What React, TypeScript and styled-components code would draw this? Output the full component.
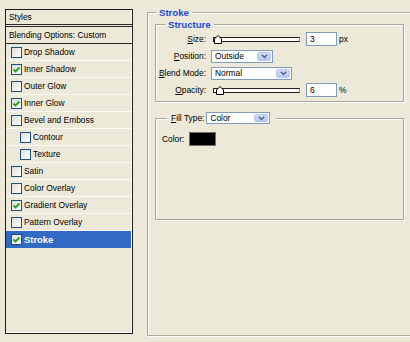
import styled, { createGlobalStyle } from 'styled-components';

const GlobalStyle = createGlobalStyle`
  html, body {
    margin: 0;
    padding: 0;
  }
  body {
    width: 410px;
    height: 342px;
    overflow: hidden;
    background: #ECE9D8;
    font-family: 'Liberation Sans', Arial, sans-serif;
    font-size: 8.4px;
    color: #000;
  }
`;

const Dialog = styled.div`
  display: flex;
  align-items: flex-start;
  padding-left: 5px;
  gap: 14px;
`;

/* ---------- styles list ---------- */

const StylesPanel = styled.div`
  flex: none;
  margin-top: 9px;
  width: 128px;
  height: 325px;
  box-sizing: border-box;
  border: 1px solid #1e1e1e;
  box-shadow: inset -1px -1px 0 #fff;
  display: flex;
  flex-direction: column;
`;

const PanelHeader = styled.div`
  height: 14px;
  display: flex;
  align-items: center;
  padding-left: 3px;
  border-bottom: 3px double #2a2a2a;
`;

const BlendingRow = styled.div`
  height: 16px;
  display: flex;
  align-items: center;
  padding-left: 3px;
  border-bottom: 1px solid #2a2a2a;
`;

const EffectRow = styled.div<{ $nested?: boolean; $selected?: boolean }>`
  height: 16px;
  display: flex;
  align-items: center;
  gap: 2px;
  padding-left: ${p => (p.$nested ? 14 : 5)}px;
  margin-right: 1px;
  border-bottom: 1px solid ${p => (p.$selected ? '#316AC5' : '#fbfaf5')};
  background: ${p => (p.$selected ? '#316AC5' : 'transparent')};
  color: ${p => (p.$selected ? '#fff' : '#000')};
  font-weight: ${p => (p.$selected ? 'bold' : 'normal')};
  font-size: ${p => (p.$selected ? '9.4px' : 'inherit')};
`;

const CheckBox = styled.span`
  width: 11px;
  height: 11px;
  box-sizing: border-box;
  border: 1px solid #1C5180;
  background: linear-gradient(135deg, #DCDCD7, #fff);
  display: flex;
  align-items: center;
  justify-content: center;
  flex: none;
`;

const Check = ({ checked }: { checked?: boolean }) => (
  <CheckBox>
    {checked && (
      <svg width="9" height="9" viewBox="0 0 9 9">
        <polyline points="1.5,4.5 3.5,6.5 7.5,2.5" fill="none" stroke="#21A121" strokeWidth="1.8" />
      </svg>
    )}
  </CheckBox>
);

/* ---------- group boxes ---------- */

const Group = styled.fieldset<{ $w: number; $h: number }>`
  flex: none;
  margin: 0;
  padding: 0;
  min-inline-size: 0;
  width: ${p => p.$w}px;
  height: ${p => p.$h}px;
  box-sizing: border-box;
  border: 1px solid #ACA899;
  box-shadow: inset 1px 1px 0 #fff, 1px 1px 0 #fff;
`;

const Legend = styled.legend`
  margin-left: 8px;
  padding: 0 3px;
  background: #ECE9D8;
  color: #1c4bd4;
  font-weight: bold;
  font-size: 9.6px;
  line-height: 11px;
`;

const OuterGroup = styled(Group)`
  margin-top: 7px;
  padding-top: 0;
`;

const StructureGroup = styled(Group)`
  margin: 1px 0 0 7px;
  padding: 2px 0 0 1px;
`;

const FillGroup = styled(Group)`
  margin: 10px 0 0 7px;
  padding: 8px 0 0 6px;
`;

const FillLegend = styled.legend`
  margin-left: 5px;
  padding: 0 6px 0 4px;
  background: #ECE9D8;
  display: flex;
  align-items: center;
  gap: 2px;
  height: 12px;
`;

/* ---------- form ---------- */

const FormGrid = styled.div`
  display: grid;
  grid-template-columns: 49px auto;
  grid-auto-rows: 14px;
  column-gap: 5px;
  row-gap: 3px;
  align-items: center;
`;

const Label = styled.label`
  text-align: right;
  white-space: nowrap;
`;

const ControlRow = styled.div`
  display: flex;
  align-items: center;
`;

const SliderBox = styled.div`
  position: relative;
  margin-left: 2px;
  width: 87px;
  height: 14px;
  display: flex;
  align-items: center;
`;

const Track = styled.div`
  width: 100%;
  height: 5px;
  box-sizing: border-box;
  border: 1px solid #1e1e1e;
  border-right-color: #8a8778;
  background: #fdfcf4;
`;

const Thumb = styled.svg`
  position: absolute;
  top: 3px;
`;

const NumberInput = styled.input`
  margin-left: 6px;
  width: 31px;
  height: 14px;
  box-sizing: border-box;
  border: 1px solid #7F9DB9;
  background: #fff;
  padding: 0 0 0 3px;
  font: inherit;
  color: #000;
  outline: none;
`;

const Unit = styled.span`
  margin-left: 2px;
`;

const SelectBox = styled.div<{ $w: number; $h: number }>`
  width: ${p => p.$w}px;
  height: ${p => p.$h}px;
  box-sizing: border-box;
  border: 1px solid #7F9DB9;
  background: #fff;
  padding: 1px;
  display: flex;
  align-items: center;
`;

const SelectValue = styled.span`
  flex: 1;
  padding-left: 2px;
  white-space: nowrap;
`;

const SelectButton = styled.span`
  width: 14px;
  height: 100%;
  border-radius: 2px;
  background: linear-gradient(#cfdcfc, #b6c9f5);
  border: 1px solid #b7c8f2;
  box-sizing: border-box;
  display: flex;
  align-items: center;
  justify-content: center;
`;

const Select = ({ value, w, h = 13 }: { value: string; w: number; h?: number }) => (
  <SelectBox $w={w} $h={h}>
    <SelectValue>{value}</SelectValue>
    <SelectButton>
      <svg width="7" height="5" viewBox="0 0 7 5">
        <polyline points="0.8,0.8 3.5,3.5 6.2,0.8" fill="none" stroke="#4d6185" strokeWidth="1.5" />
      </svg>
    </SelectButton>
  </SelectBox>
);

const Slider = ({ value, max }: { value: number; max: number }) => (
  <SliderBox>
    <Track />
    <Thumb width="8" height="9" viewBox="0 0 8 9" style={{ left: Math.round((value / max) * 50) }}>
      <polygon points="4,0.5 7.5,4 7.5,8.5 0.5,8.5 0.5,4" fill="#fdfcf4" stroke="#000" strokeWidth="1" />
    </Thumb>
  </SliderBox>
);

const ColorRow = styled.div`
  display: flex;
  align-items: center;
  gap: 5px;
`;

const Swatch = styled.div`
  width: 27px;
  height: 14px;
  box-sizing: border-box;
  background: #000;
  border: 1px solid #6f6f6f;
`;

const effects = [
  { name: 'Drop Shadow' },
  { name: 'Inner Shadow', checked: true },
  { name: 'Outer Glow' },
  { name: 'Inner Glow', checked: true },
  { name: 'Bevel and Emboss' },
  { name: 'Contour', nested: true },
  { name: 'Texture', nested: true },
  { name: 'Satin' },
  { name: 'Color Overlay' },
  { name: 'Gradient Overlay', checked: true },
  { name: 'Pattern Overlay' },
  { name: 'Stroke', checked: true, selected: true },
];

export default function App() {
  return (
    <Dialog>
      <GlobalStyle />
      <StylesPanel>
        <PanelHeader>Styles</PanelHeader>
        <BlendingRow>Blending Options: Custom</BlendingRow>
        {effects.map(e => (
          <EffectRow key={e.name} $nested={e.nested} $selected={e.selected}>
            <Check checked={e.checked} />
            <span>{e.name}</span>
          </EffectRow>
        ))}
      </StylesPanel>

      <OuterGroup $w={280} $h={329}>
        <Legend>Stroke</Legend>
        <StructureGroup $w={249} $h={83}>
          <Legend>Structure</Legend>
          <FormGrid>
            <Label><u>S</u>ize:</Label>
            <ControlRow>
              <Slider value={3} max={250} />
              <NumberInput defaultValue="3" />
              <Unit>px</Unit>
            </ControlRow>
            <Label><u>P</u>osition:</Label>
            <ControlRow>
              <Select value="Outside" w={62} />
            </ControlRow>
            <Label><u>B</u>lend Mode:</Label>
            <ControlRow>
              <Select value="Normal" w={81} />
            </ControlRow>
            <Label><u>O</u>pacity:</Label>
            <ControlRow>
              <Slider value={6} max={100} />
              <NumberInput defaultValue="6" />
              <Unit>%</Unit>
            </ControlRow>
          </FormGrid>
        </StructureGroup>

        <FillGroup $w={249} $h={108}>
          <FillLegend>
            <span><u>F</u>ill Type:</span>
            <Select value="Color" w={64} h={12} />
          </FillLegend>
          <ColorRow>
            <span>Color:</span>
            <Swatch />
          </ColorRow>
        </FillGroup>
      </OuterGroup>
    </Dialog>
  );
}
